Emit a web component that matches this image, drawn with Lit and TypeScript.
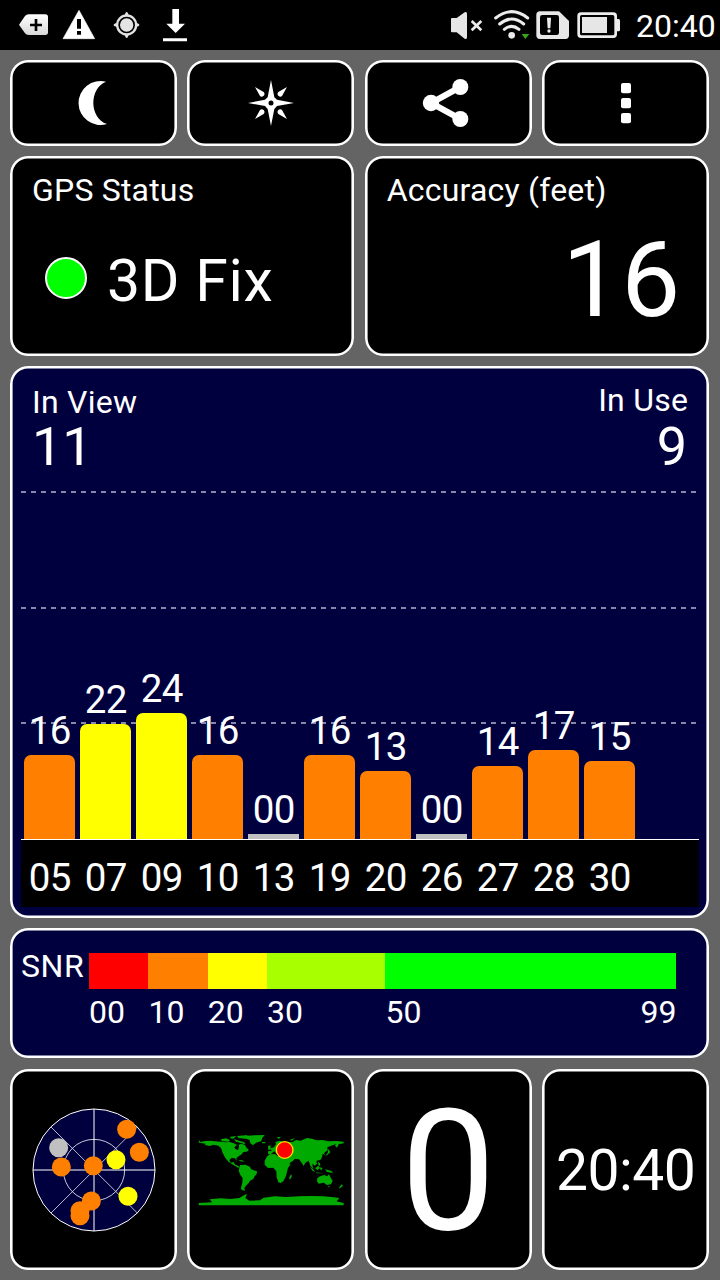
import { LitElement, html, svg, css } from "lit";
import { customElement } from "lit/decorators.js";
import { styleMap } from "lit/directives/style-map.js";

const ORANGE = "#ff8000";
const YELLOW = "#ffff00";
const GREY = "#c0c0c0";

const SATELLITES = [
  { id: "05", snr: "16", h: 84, c: ORANGE },
  { id: "07", snr: "22", h: 115, c: YELLOW },
  { id: "09", snr: "24", h: 126, c: YELLOW },
  { id: "10", snr: "16", h: 84, c: ORANGE },
  { id: "13", snr: "00", h: 5, c: GREY },
  { id: "19", snr: "16", h: 84, c: ORANGE },
  { id: "20", snr: "13", h: 68, c: ORANGE },
  { id: "26", snr: "00", h: 5, c: GREY },
  { id: "27", snr: "14", h: 73, c: ORANGE },
  { id: "28", snr: "17", h: 89, c: ORANGE },
  { id: "30", snr: "15", h: 78, c: ORANGE },
];

const SCALE = [
  { t: "00", w: 59.4, c: "#ff0000" },
  { t: "10", w: 59.4, c: ORANGE },
  { t: "20", w: 59.3, c: YELLOW },
  { t: "30", w: 118.4, c: "#a8ff00" },
  { t: "50", w: 291, c: "#00ff00" },
];

const SKY = [
  [348, 117, ORANGE],
  [386, 186, ORANGE],
  [316, 208, YELLOW],
  [144, 172, GREY],
  [152, 230, ORANGE],
  [248, 226, ORANGE],
  [352, 318, YELLOW],
  [242, 332, ORANGE],
  [208, 361, ORANGE],
  [208, 376, ORANGE],
];

@customElement("status-bar")
export class StatusBar extends LitElement {
  static styles = css`
    :host {
      display: flex;
      height: 50px;
      background: #000;
      align-items: flex-start;
      color: #fff;
    }
    svg { display: block; flex: none; height: 50px; }
    .left { width: 240px; }
    .right { width: 200px; margin-left: 190px; }
    .clock { font-size: 32px; line-height: 32px; padding: 10px 0 0 6px; white-space: nowrap; }
  `;
  render() {
    return html`
      <svg class="left" viewBox="0 0 720 150">
        <defs>
          <linearGradient id="m" x1="0" y1="0" x2="0" y2="1">
            <stop offset="0" stop-color="#fff" /><stop offset="1" stop-color="#d8d8d8" />
          </linearGradient>
        </defs>
        <path d="M57 74 L75 48 Q79 43 86 43 H136 Q144 43 144 51 V97 Q144 105 136 105 H86 Q79 105 75 100Z" fill="url(#m)" />
        <path d="M108 57 V93 M90 75 H126" stroke="#000" stroke-width="8" />
        <path d="M237 31 L284 116 H189Z" fill="#fff" stroke="#fff" stroke-width="2" stroke-linejoin="round" />
        <path d="M231 57 H243 V86 H231Z M231 93 H243 V104 H231Z" fill="#000" />
        <g fill="#e4e4e4">
          <path d="M374 47 Q376 36 380 36 Q384 36 386 47Z M374 103 Q376 114 380 114 Q384 114 386 103Z M352 69 Q341 71 341 75 Q341 79 352 81Z M407 69 Q418 71 418 75 Q418 79 407 81Z" />
          <circle cx="380" cy="75" r="32" />
        </g>
        <circle cx="380" cy="75" r="22.5" fill="#e4e4e4" stroke="#000" stroke-width="5" />
        <path d="M517 27 H537 V71 H555 L527 99 L499 71 H517Z M489 115 H561 V124 H489Z" fill="#fff" />
      </svg>
      <svg class="right" viewBox="0 0 600 150">
        <path d="M63 57 Q63 54 66 54 H80 L104 37 Q111 34 111 42 V112 Q111 119 104 116 L80 97 H66 Q63 97 63 94Z" fill="#e6e6e6" />
        <path d="M125 63 L154 91 M154 63 L125 91" stroke="#ececec" stroke-width="8" />
        <g fill="none" stroke="#ececec" stroke-width="9" stroke-linecap="round">
          <path d="M197 54 Q245 16 293 54" /><path d="M209 72 Q245 42 281 72" /><path d="M223 88 Q245 70 267 88" />
        </g>
        <circle cx="245" cy="106" r="10" fill="#ececec" />
        <path d="M272 100 H300 L286 119Z" fill="#000" />
        <path d="M275 102 H298 L286 117Z" fill="#36a51a" />
        <path d="M330 34 H387 L417 63 V106 Q417 117 406 117 H330 Q319 117 319 106 V45 Q319 34 330 34Z" fill="#e8e8e8" />
        <rect x="330" y="45" width="57" height="60" rx="7" fill="#000" />
        <path d="M351 53 H363 L361 85 H353Z" fill="#eee" /><circle cx="357" cy="93" r="5" fill="#eee" />
        <path d="M453 37 H550 Q561 37 561 48 V57 H566 Q570 57 570 62 V90 Q570 94 566 94 H561 V103 Q561 114 550 114 H453 Q442 114 442 103 V48 Q442 37 453 37Z" fill="#ececec" />
        <rect x="450" y="45" width="103" height="61" rx="5" fill="#000" />
        <rect x="456" y="51" width="75" height="48" fill="#e6e6e6" />
      </svg>
      <div class="clock">20:40</div>
    `;
  }
}

@customElement("satellite-chart")
export class SatelliteChart extends LitElement {
  static styles = css`
    :host { display: block; padding: 0 10px 0 11px; color: #fff; }
    .head { display: flex; justify-content: space-between; height: 125px; padding: 0 11px 0 11px; box-sizing: border-box; }
    .count { display: flex; flex-direction: column; }
    .count.use { align-items: flex-end; }
    .label { font-size: 32px; line-height: 32px; padding-top: 20px; height: 34px; white-space: nowrap; letter-spacing: 0.25px; }
    .use .label { padding-top: 18px; height: 36px; }
    .num { font-size: 54px; line-height: 54px; }
    .use .num { padding-right: 1px; }
    .plot {
      height: 348px;
      background-image: repeating-linear-gradient(90deg, #8787ab 0 5px, transparent 5px 10px),
        repeating-linear-gradient(90deg, #8787ab 0 5px, transparent 5px 10px),
        repeating-linear-gradient(90deg, #8787ab 0 5px, transparent 5px 10px);
      background-size: 676px 2px;
      background-repeat: no-repeat;
      background-position: 0 0, 0 116px, 0 231px;
      display: flex;
      align-items: flex-end;
      gap: 5px;
      padding-left: 3px;
      box-sizing: border-box;
    }
    .col { width: 51px; display: flex; flex-direction: column; align-items: center; }
    .snr, .id { font-size: 38.5px; line-height: 38px; letter-spacing: -0.6px; text-indent: 0.6px; }
    .snr { padding-bottom: 5px; }
    .bar { width: 51px; border-radius: 7px 7px 0 0; }
    .bar.none { border-radius: 0; }
    .ids { border-top: 1px solid #fff; background: #000; height: 67px; display: flex; gap: 5px; padding-left: 3px; }
    .id { width: 51px; text-align: center; padding-top: 19px; }
  `;
  render() {
    return html`
      <div class="head">
        <div class="count"><div class="label">In View</div><div class="num">11</div></div>
        <div class="count use"><div class="label">In Use</div><div class="num">9</div></div>
      </div>
      <div class="plot">
        ${SATELLITES.map(
          (s) => html`<div class="col">
            <div class="snr">${s.snr}</div>
            <div class="bar ${s.snr === "00" ? "none" : ""}" style=${styleMap({ height: `${s.h}px`, background: s.c })}></div>
          </div>`
        )}
      </div>
      <div class="ids">${SATELLITES.map((s) => html`<div class="id">${s.id}</div>`)}</div>
    `;
  }
}

@customElement("snr-scale")
export class SnrScale extends LitElement {
  static styles = css`
    :host { display: flex; padding: 25px 32px 0 11px; color: #fff; font-size: 32px; line-height: 32px; }
    .name { flex: none; width: 68px; line-height: 27px; letter-spacing: 0.6px; }
    .scale { flex: none; width: 587.5px; }
    .bar, .marks { display: flex; }
    .bar { height: 36px; }
    .marks { padding-top: 7px; }
    .seg { flex: none; }
    .mark { flex: none; display: flex; justify-content: space-between; }
  `;
  render() {
    return html`
      <div class="name">SNR</div>
      <div class="scale">
        <div class="bar">${SCALE.map((s) => html`<div class="seg" style=${styleMap({ width: `${s.w}px`, background: s.c })}></div>`)}</div>
        <div class="marks">
          ${SCALE.map((s) => html`<div class="mark" style=${styleMap({ width: `${s.w}px` })}><span>${s.t}</span>${s.t === "50" ? html`<span>99</span>` : ""}</div>`)}
        </div>
      </div>
    `;
  }
}

@customElement("sky-view")
export class SkyView extends LitElement {
  static styles = css`
    :host { display: block; }
    svg { display: block; width: 124px; height: 124px; }
  `;
  render() {
    return html`<svg viewBox="64 53 372 372">
      <g fill="none" stroke="#fff" stroke-width="3">
        <circle cx="250" cy="239" r="183" fill="#00003f" />
        <circle cx="250" cy="239" r="92" stroke="#c8c8dc" />
        <path d="M250 56 V422 M67 239 H433" />
        <path d="M121 110 L380 368 M380 110 L121 368" stroke-width="2.2" />
      </g>
      ${SKY.map(([x, y, c]) => svg`<circle cx=${x} cy=${y} r="28.5" fill=${c} />`)}
    </svg>`;
  }
}

@customElement("world-map")
export class WorldMap extends LitElement {
  static styles = css`
    :host { display: block; }
    svg { display: block; width: 146px; height: 72px; }
  `;
  render() {
    return html`<svg viewBox="22 42 438 216">
      <g fill="#00aa00">
        <path d="M24 60 L30 66 L42 63 L60 62 L72 64 L92 65 L104 67 L116 66 L128 69 L139 75 L131 82 L134 87 L142 90 L145 82 L144 74 L152 71 L163 75 L168 84 L175 90 L168 95 L158 96 L153 103 L145 108 L137 114 L139 123 L133 115 L123 114 L116 120 L120 128 L129 126 L132 133 L141 137 L148 142 L142 143 L127 134 L113 125 L104 114 L96 99 L91 84 L83 77 L69 74 L57 78 L43 75 L44 71 L25 68Z" />
        <path d="M90 58 L106 55 L118 60 L114 65 L94 64Z M119 50 L137 48 L128 56 L119 55Z M130 57 L145 62 L160 66 L165 73 L153 70 L136 65Z M139 48 L172 45 L160 54 L144 55Z" />
        <path d="M151 55 L166 48 L190 46 L222 45 L215 54 L211 64 L196 68 L187 76 L179 70 L177 60 L166 56Z M213 66 L224 66 L224 70 L215 70Z" />
        <path d="M143 120 L155 121 L162 125 L150 124Z" />
        <path d="M148 135 L164 134 L178 140 L181 148 L199 154 L198 162 L191 170 L188 177 L178 182 L174 189 L166 197 L161 204 L163 212 L153 210 L151 203 L155 188 L156 174 L149 165 L144 152Z" />
        <path d="M222 122 L230 108 L239 103 L253 102 L260 108 L272 109 L282 113 L290 127 L300 132 L292 144 L289 155 L286 168 L278 184 L270 189 L263 187 L258 172 L257 154 L248 143 L232 144 L222 134Z M301 163 L304 168 L298 179 L295 174Z" />
        <path d="M232 101 L232 94 L243 92 L239 85 L250 82 L256 72 L254 66 L267 62 L278 65 L291 67 L306 66 L316 60 L330 62 L349 54 L364 56 L378 61 L396 60 L412 64 L438 63 L459 65 L459 70 L444 73 L439 83 L433 77 L437 72 L421 77 L410 82 L411 91 L400 99 L403 105 L396 101 L394 112 L389 120 L377 122 L379 132 L371 137 L365 130 L366 141 L370 149 L359 137 L354 122 L344 128 L339 138 L332 127 L325 118 L312 117 L306 124 L290 133 L284 120 L283 109 L270 108 L267 101 L260 104 L251 94 L244 100 L238 104Z" />
        <path d="M232 78 L239 76 L241 88 L233 91Z M258 51 L270 51 L265 57Z M296 60 L313 54 L304 62Z M413 86 L419 97 L410 105 L403 109 L411 99Z M379 110 L384 116 L380 120Z" />
        <path d="M357 139 L367 148 L374 155 L366 153Z M373 145 L383 137 L388 144 L381 150Z M387 142 L396 144 L391 152Z M373 157 L387 158 L399 160 L380 160Z M403 148 L421 152 L428 159 L409 156Z M382 125 L388 130 L389 139 L383 135Z" />
        <path d="M380 174 L390 168 L401 165 L409 169 L415 163 L421 175 L426 183 L421 193 L409 195 L399 188 L384 191 L379 184Z M412 199 L418 199 L415 203Z M453 193 L457 197 L448 205 L444 205Z" />
        <path d="M24 249 L64 247 L57 238 L90 235 L119 237 L146 234 L160 226 L169 221 L164 234 L176 242 L208 241 L219 233 L253 229 L286 231 L325 229 L362 228 L398 229 L430 232 L446 234 L438 244 L459 249 V256 H24Z" />
      </g>
      <circle cx="282" cy="90" r="25" fill="#ff0000" stroke="#ffe000" stroke-width="4" />
    </svg>`;
  }
}

@customElement("app-root")
export class AppRoot extends LitElement {
  static styles = css`
    :host { display: block; height: 1280px; background: #646464; font-family: Roboto, sans-serif; color: #fff; overflow: hidden; }
    .grid { display: grid; grid-template-columns: repeat(4, 167px); grid-template-rows: 86px 200px 552px 130px 202px; gap: 10px 10.4px; padding: 10px 10px 0; }
    .card { background: #000; border-radius: 18px; box-shadow: inset 0 0 0 2.6px #fff; box-sizing: border-box; min-width: 0; }
    .half { grid-column: span 2; }
    .full { grid-column: span 4; background: #00003f; }
    .center { display: flex; align-items: center; justify-content: center; }
    .title { font-size: 32px; line-height: 32px; padding: 18px 0 0 22px; white-space: nowrap; letter-spacing: 0.2px; }
    .fix { display: flex; align-items: center; padding: 41px 0 0 35px; }
    .led { width: 38px; height: 38px; border: 2px solid #fff; border-radius: 50%; background: #00ff00; margin-bottom: 2px; }
    .fixtext { font-size: 59px; line-height: 59px; padding: 4px 0 0 20px; white-space: nowrap; letter-spacing: 0.6px; }
    .value { font-size: 105px; line-height: 105px; text-align: right; padding: 22px 29px 0 0; }
    .tail { margin-top: 1px; }
    .big { font-size: 169px; line-height: 169px; padding-top: 4px; }
    .time { font-size: 57px; line-height: 57px; padding-top: 2px; white-space: nowrap; letter-spacing: -0.5px; }
    .icon { display: block; width: 167px; height: 86px; }
  `;
  render() {
    return html`
      <status-bar></status-bar>
      <div class="grid">
        <div class="card"><svg class="icon" viewBox="30 180 501 258"><path d="M318 245 A66 66 0 1 0 321 372 C267 353 267 265 318 245Z" fill="#fff" /></svg></div>
        <div class="card"><svg class="icon" viewBox="21 30 501 258">
          <path d="M273 90 L283 142 L291 149 L342 159 L291 168 L283 177 L273 228 L263 177 L255 168 L204 159 L255 149 L263 142Z M225 111 L251 126 Q256 132 251 137 Q245 143 240 138Z M321 111 L295 126 Q290 132 295 137 Q301 143 306 138Z M225 207 L251 192 Q256 186 251 180 Q245 175 240 180Z M321 207 L295 192 Q290 186 295 180 Q301 175 306 180Z" fill="#fff" />
          <circle cx="273" cy="159" r="7.5" fill="#000" />
        </svg></div>
        <div class="card"><svg class="icon" viewBox="555 30 501 258">
          <path d="M841 111 L753 159 L841 207" fill="none" stroke="#fff" stroke-width="18" />
          <g fill="#fff"><circle cx="841" cy="111" r="24" /><circle cx="753" cy="159" r="24.5" /><circle cx="841" cy="207" r="24" /></g>
        </svg></div>
        <div class="card"><svg class="icon" viewBox="336 180 501 258" fill="#fff">
          <rect x="573" y="249" width="30" height="31" rx="6" /><rect x="573" y="294" width="30" height="31" rx="6" /><rect x="573" y="339" width="30" height="31" rx="6" />
        </svg></div>
        <div class="card half">
          <div class="title">GPS Status</div>
          <div class="fix"><div class="led"></div><div class="fixtext">3D Fix</div></div>
        </div>
        <div class="card half">
          <div class="title">Accuracy (feet)</div>
          <div class="value">16</div>
        </div>
        <div class="card full"><satellite-chart></satellite-chart></div>
        <div class="card full"><snr-scale></snr-scale></div>
        <div class="card center tail"><sky-view></sky-view></div>
        <div class="card center tail"><world-map></world-map></div>
        <div class="card center tail"><div class="big">0</div></div>
        <div class="card center tail"><div class="time">20:40</div></div>
      </div>
    `;
  }
}
